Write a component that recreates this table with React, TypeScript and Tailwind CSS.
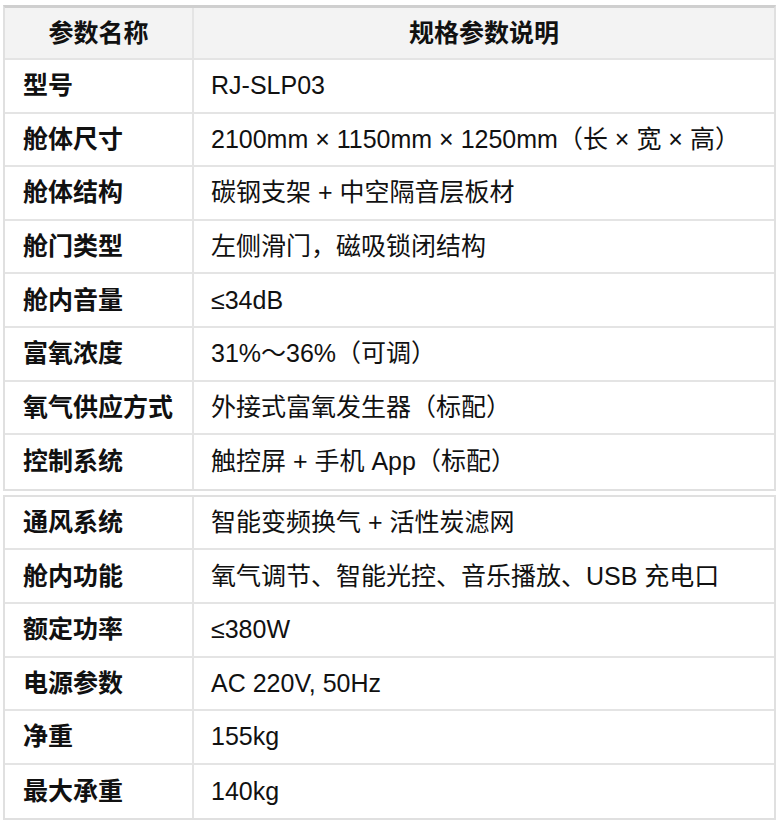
const font = "font-['Liberation_Sans','Noto_Sans_CJK_SC',sans-serif]";

const tableA: [string, string][] = [
  ["型号", "RJ-SLP03"],
  ["舱体尺寸", "2100mm × 1150mm × 1250mm（长 × 宽 × 高）"],
  ["舱体结构", "碳钢支架 + 中空隔音层板材"],
  ["舱门类型", "左侧滑门，磁吸锁闭结构"],
  ["舱内音量", "≤34dB"],
  ["富氧浓度", "31%～36%（可调）"],
  ["氧气供应方式", "外接式富氧发生器（标配）"],
  ["控制系统", "触控屏 + 手机 App（标配）"],
];

const tableB: [string, string][] = [
  ["通风系统", "智能变频换气 + 活性炭滤网"],
  ["舱内功能", "氧气调节、智能光控、音乐播放、USB 充电口"],
  ["额定功率", "≤380W"],
  ["电源参数", "AC 220V, 50Hz"],
  ["净重", "155kg"],
  ["最大承重", "140kg"],
];

function Row({name, value, last}: {name: string; value: string; last?: boolean}) {
  return (
    <div
      className={`grid grid-cols-[189px_1fr] h-[53.6px] ${last ? "" : "border-b-2 border-[#e4e4e4]"}`}
    >
      <div className="flex items-center pl-[18px] border-r-2 border-[#e4e4e4] font-bold">{name}</div>
      <div className="flex items-center pl-[17px]">{value}</div>
    </div>
  );
}

export default function App() {
  return (
    <div className={`w-[779px] h-[829px] bg-white text-[25px] leading-none text-[#111] ${font}`}>
      <div className="pt-[5px] px-[3px]">
        {/* first table */}
        <div className="border-2 border-t-[3px] border-[#e0e0e0] border-t-[#cfcfcf]">
          <div className="grid grid-cols-[189px_1fr] h-[52px] bg-[#f3f3f3] border-b-2 border-[#e4e4e4] font-bold">
            <div className="flex items-center justify-center border-r-2 border-[#e4e4e4]">参数名称</div>
            <div className="flex items-center justify-center">规格参数说明</div>
          </div>
          {tableA.map(([n, v], i) => (
            <Row key={n} name={n} value={v} last={i === tableA.length - 1}/>
          ))}
        </div>

        {/* second table */}
        <div className="mt-[4px] border-2 border-[#e0e0e0]">
          {tableB.map(([n, v], i) => (
            <Row key={n} name={n} value={v} last={i === tableB.length - 1}/>
          ))}
        </div>
      </div>
    </div>
  );
}
